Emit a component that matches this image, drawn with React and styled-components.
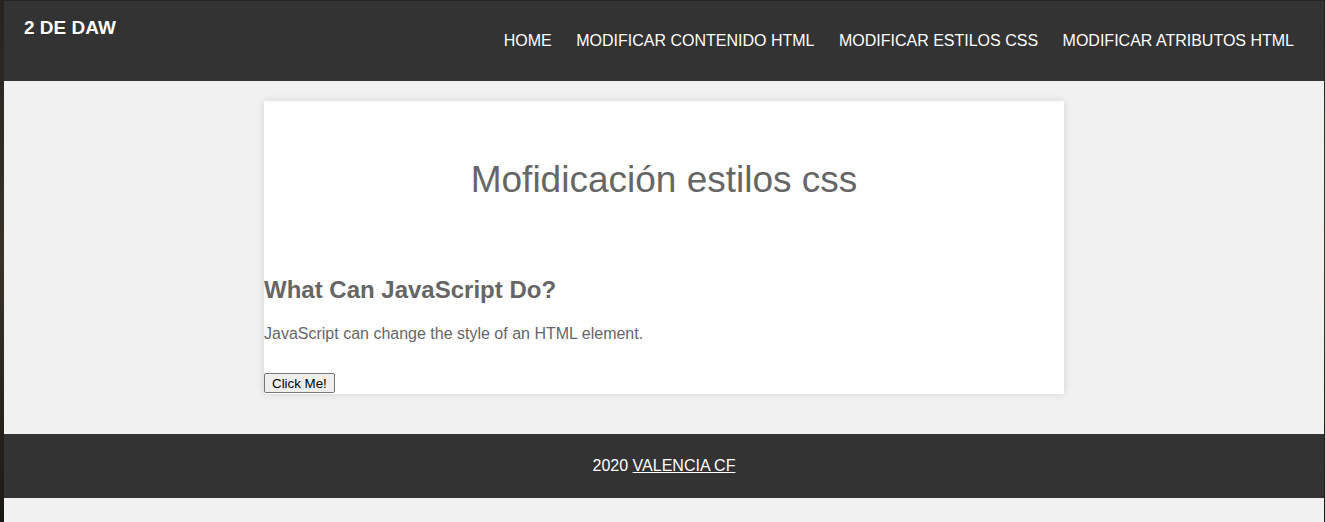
import React from "react";
import styled, { createGlobalStyle } from "styled-components";

/* ---------- GLOBAL ---------- */
const GlobalStyle = createGlobalStyle`
  html, body {
    margin: 0;
    padding: 0;
  }
  body {
    font-family: "Liberation Sans", Arial, sans-serif;
    background: #1c1a16 linear-gradient(180deg, #262320 0%, #3a3224 50%, #1b1915 100%);
    min-height: 522px;
  }
`;

/* ---------- PAGE LAYOUT ---------- */
const Frame = styled.div`
  margin: 1px 1px 0 4px;
  min-height: 521px;
  background: #f1f1f1;
  display: flex;
  flex-direction: column;
`;

const Header = styled.header`
  background: #333333;
  height: 80px;
  display: flex;
  justify-content: space-between;
  align-items: flex-start;
  padding: 0 30px 0 20px;
  box-sizing: border-box;
  color: #ffffff;
`;

const Brand = styled.div`
  font-size: 19px;
  font-weight: 700;
  margin-top: 16px;
`;

const Nav = styled.nav`
  display: flex;
  gap: 24.5px;
  margin-top: 31px;
`;

const NavLink = styled.a`
  color: #ffffff;
  font-size: 16px;
  text-decoration: none;
  text-transform: uppercase;
`;

const Main = styled.main`
  padding: 20px 0 40px;
  display: flex;
  justify-content: center;
`;

/* ---------- CARD ---------- */
const Card = styled.section`
  width: 800px;
  background: #ffffff;
  box-shadow: 0 0 8px rgba(0, 0, 0, 0.12);
  color: #666666;
  padding-bottom: 1px;
`;

const Title = styled.h1`
  margin: 0;
  padding-top: 58px;
  font-size: 37px;
  font-weight: 400;
  text-align: center;
`;

const SubTitle = styled.h2`
  margin: 75px 0 0;
  font-size: 24px;
  font-weight: 700;
`;

const Text = styled.p`
  margin: 21px 0 0;
  font-size: 16px;
`;

const Button = styled.button`
  margin-top: 30px;
  font-family: "Liberation Sans", Arial, sans-serif;
  font-size: 13.333px;
  color: #000000;
  background: #efefef;
  border: 1px solid #767676;
  border-radius: 2px;
  padding: 2px 7px 1px;
`;

/* ---------- FOOTER ---------- */
const Footer = styled.footer`
  background: #333333;
  color: #ffffff;
  text-align: center;
  font-size: 16px;
  padding: 23px 0;
  line-height: 18px;

  a {
    color: #ffffff;
  }
`;

const links = [
  "Home",
  "Modificar contenido HTML",
  "Modificar estilos CSS",
  "Modificar atributos HTML",
];

export default function App() {
  return (
    <>
      <GlobalStyle />
      <Frame>
        <Header>
          <Brand>2 DE DAW</Brand>
          <Nav>
            {links.map((l) => (
              <NavLink key={l} href="#">
                {l}
              </NavLink>
            ))}
          </Nav>
        </Header>

        <Main>
          <Card>
            <Title>Mofidicación estilos css</Title>
            <SubTitle>What Can JavaScript Do?</SubTitle>
            <Text>JavaScript can change the style of an HTML element.</Text>
            <Button type="button">Click Me!</Button>
          </Card>
        </Main>

        <Footer>
          2020 <a href="#">VALENCIA CF</a>
        </Footer>
      </Frame>
    </>
  );
}
